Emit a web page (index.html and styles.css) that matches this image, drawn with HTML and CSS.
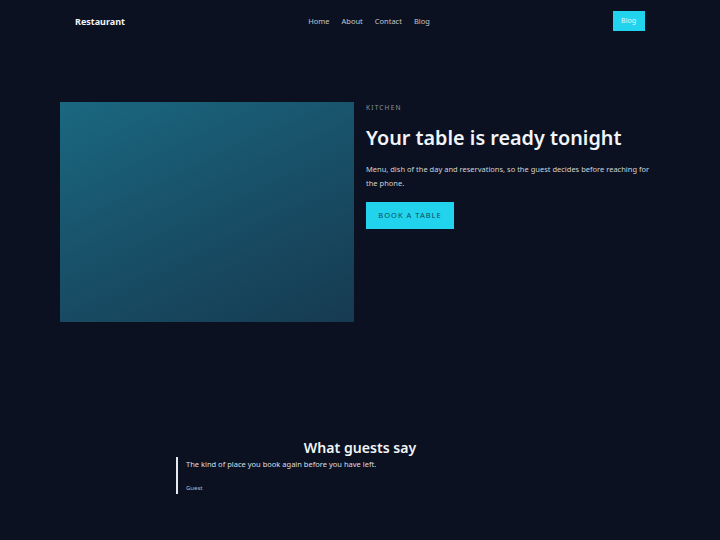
FILE: index.html
```html
<!DOCTYPE html>
<html lang="en">
<head>
    <meta charset="UTF-8">
    <meta name="viewport" content="width=device-width, initial-scale=1.0">
    <title>Restaurant</title>
    <link rel="stylesheet" href="styles.css">
</head>
<body>
    <header class="topbar">
        <a class="brand" href="#">Restaurant</a>
        <nav class="menu">
            <a href="#">Home</a>
            <a href="#">About</a>
            <a href="#">Contact</a>
            <a href="#">Blog</a>
        </nav>
        <a class="topbar-btn" href="#">Blog</a>
    </header>

    <section class="hero">
        <div class="hero-photo"></div>
        <div class="hero-text">
            <p class="eyebrow">KITCHEN</p>
            <h1>Your table is ready tonight</h1>
            <p class="lead">Menu, dish of the day and reservations, so the guest decides before reaching for the phone.</p>
            <a class="cta" href="#">BOOK A TABLE</a>
        </div>
    </section>

    <section class="reviews">
        <h2>What guests say</h2>
        <blockquote class="quote">
            <p>The kind of place you book again before you have left.</p>
            <cite>Guest</cite>
        </blockquote>
    </section>
</body>
</html>
```

FILE: styles.css
```css
body {
    margin: 0;
    background-color: #0b1120;
    color: #e5e9f0;
    font-family: "Noto Sans", "Open Sans", sans-serif;
}
a {
    text-decoration: none;
    color: inherit;
}
.topbar {
    max-width: 570px;
    margin: 0 auto;
    height: 42px;
    display: flex;
    align-items: center;
    justify-content: space-between;
}
.brand {
    font-size: 9px;
    font-weight: 700;
    color: #f1f4f8;
}
.menu {
    display: flex;
    gap: 12px;
    font-size: 7.5px;
    color: #c2c6cc;
}
.topbar-btn {
    background-color: #22d3ee;
    color: #e2f5f9;
    font-size: 7px;
    padding: 6px 9px 6px 8px;
    line-height: 8px;
}
.hero {
    max-width: 600px;
    margin: 60px auto 0;
    display: grid;
    grid-template-columns: 294px 1fr;
    gap: 12px;
}
.hero-photo {
    height: 220px;
    background: linear-gradient(155deg, #1a687f 0%, #18526a 45%, #163a51 100%);
}
.hero-text {
    padding-top: 1px;
}
.eyebrow {
    margin: 0;
    font-size: 6.5px;
    letter-spacing: 1.2px;
    color: #8e939b;
}
h1 {
    margin: 12px 0 0;
    font-size: 19.8px;
    font-weight: 600;
    color: #f1f4f8;
    line-height: 28px;
}
.lead {
    margin: 10px 0 0;
    font-size: 7.5px;
    line-height: 14px;
    color: #d0d3d8;
}
.cta {
    display: inline-block;
    margin-top: 12px;
    background-color: #22d3ee;
    color: #0d4a5c;
    font-size: 7.5px;
    letter-spacing: 1px;
    width: 88px;
    height: 27px;
    line-height: 27px;
    text-align: center;
}
.reviews {
    max-width: 368px;
    margin: 117px auto 0;
}
.reviews h2 {
    margin: 0;
    text-align: center;
    font-size: 14.1px;
    font-weight: 600;
    color: #f1f4f8;
    line-height: 18px;
}
.quote {
    margin: 0;
    border-left: 2px solid #e5e9f0;
    padding: 1px 0 2px 8px;
}
.quote p {
    margin: 0;
    font-size: 7.5px;
    line-height: 12px;
    color: #dcdfe3;
}
.quote cite {
    display: block;
    margin-top: 14px;
    font-style: normal;
    font-size: 6px;
    color: #b8bcc2;
}
```
